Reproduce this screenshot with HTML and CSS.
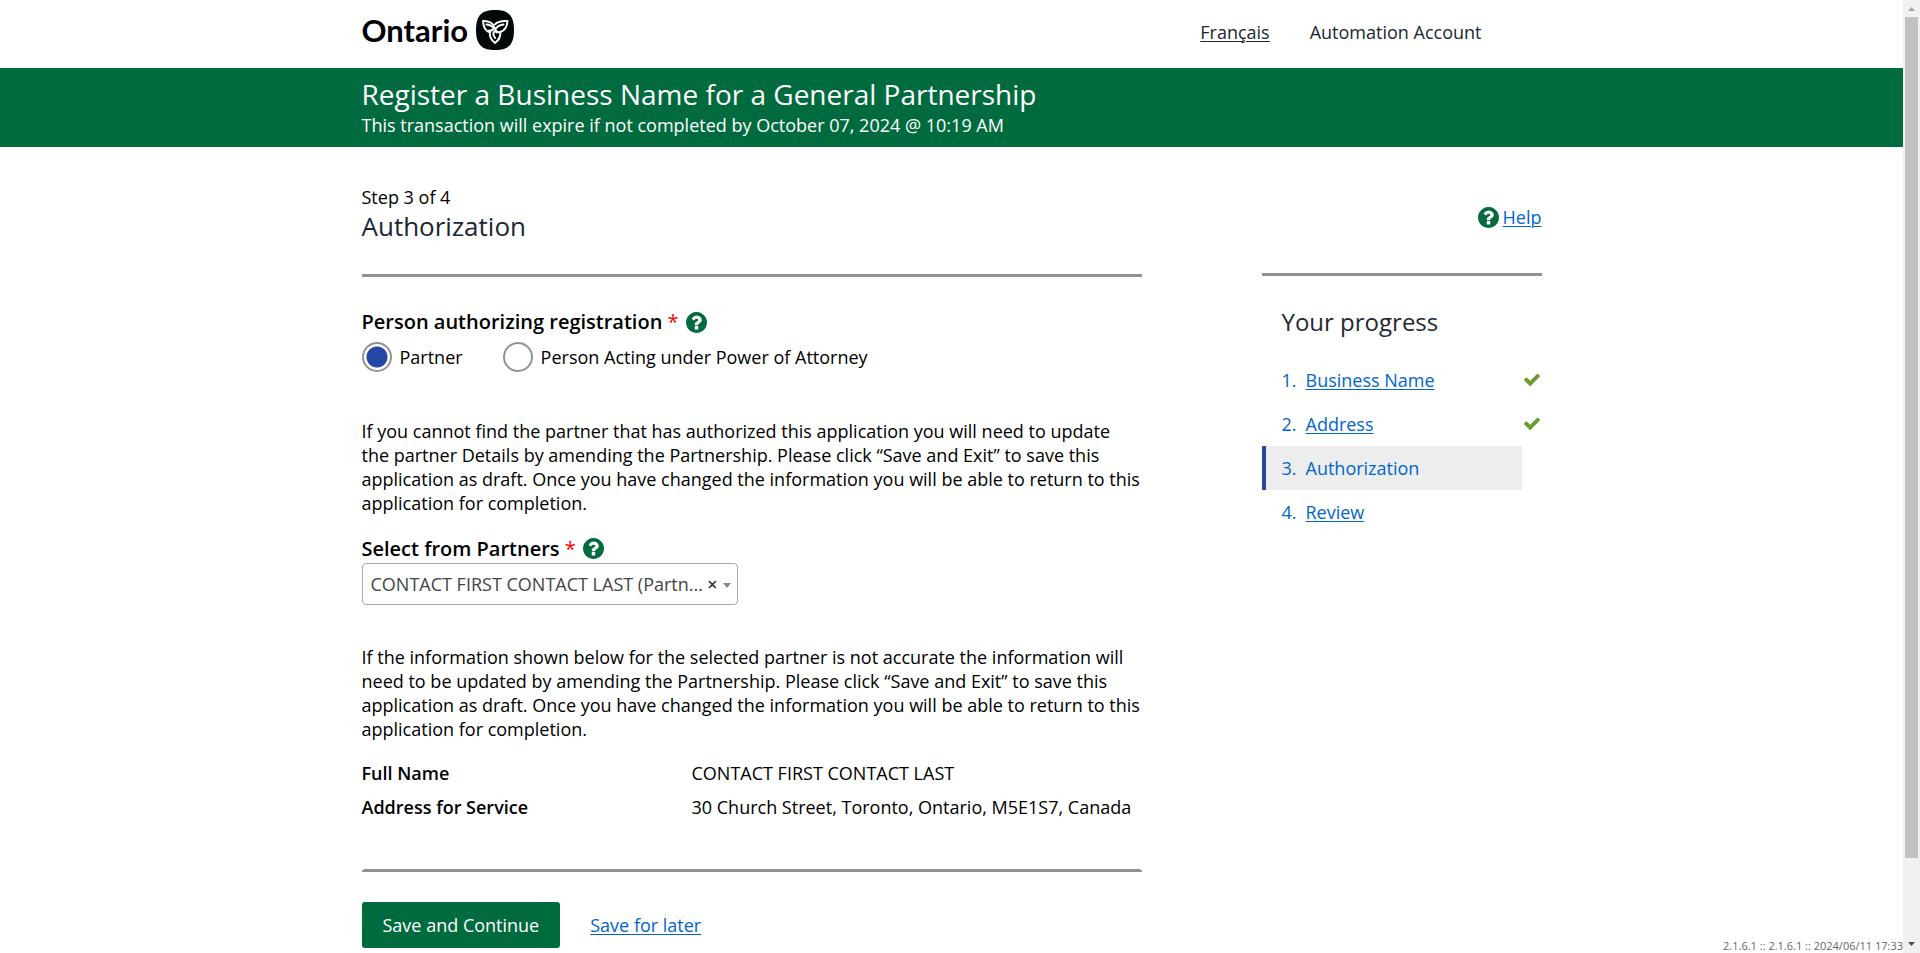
FILE: index.html
```html
<!DOCTYPE html>
<html lang="en">
<head>
<meta charset="utf-8">
<meta name="viewport" content="width=device-width, initial-scale=1">
<title>Register a Business Name for a General Partnership</title>
<link rel="stylesheet" href="styles.css">
</head>
<body>
<svg class="sprite" aria-hidden="true">
  <symbol id="question" viewBox="128 128 1536 1536"><path d="M1024 1376v-192q0-14-9-23t-23-9h-192q-14 0-23 9t-9 23v192q0 14 9 23t23 9h192q14 0 23-9t9-23zm256-672q0-88-55.5-163t-138.500-116-170-41q-243 0-371 213-15 24 8 42l132 100q7 6 19 6 16 0 25-12 53-68 86-92 34-24 86-24 48 0 85.500 26t37.500 59q0 38-20 61t-68 45q-63 28-115.500 86.500t-52.500 125.500v36q0 14 9 23t23 9h192q14 0 23-9t9-23q0-19 21.500-49.500t54.500-49.500q32-18 49-28.500t46-35 44.500-48 28-60.500 12.500-81zm384 192q0 209-103 385.500t-279.500 279.500-385.500 103-385.500-103-279.500-279.500-103-385.500 103-385.500 279.500-279.500 385.500-103 385.500 103 279.500 279.500 103 385.500z"/></symbol>
  <symbol id="check" viewBox="121 270 1550 1252"><path d="M1671 566q0 40-28 68l-724 724-136 136q-28 28-68 28t-68-28l-136-136-362-362q-28-28-28-68t28-68l136-136q28-28 68-28t68 28l294 295 656-657q28-28 68-28t68 28l136 136q28 28 28 68z"/></symbol>
</svg>
<div class="page">
  <header class="header">
    <div class="wrap header-row">
      <a class="logo" href="#" aria-label="Ontario">
        <span class="logo-text">Ontario</span>
        <svg class="logo-mark" viewBox="0 0 38 40" aria-hidden="true">
          <path d="M19 0C31 0 38 4 38 20S31 40 19 40 0 36 0 20 7 0 19 0z"/>
          <g class="logo-knot">
            <path d="M18.500 17.800C17.500 13.500 13 10.700 7 11c.4 6 3 10.300 6.700 11.200"/>
            <path d="M10.500 14.500c3 .2 5.500 1.200 7.300 3.500-1 2.200-3 3-4.800 2.600"/>
            <path d="M19 14.300C21.500 11.500 26 10.700 31.500 11c-.4 5.500-3 9.500-6.700 10.800-2 .7-3.800.2-4.800-1.300"/>
            <path d="M20 18.500c1.500-2.200 4-3.500 7.500-4"/>
            <path d="M19.700 18.300c-1 2.200-.4 3.700 1.300 4.200M14 21.500c-.8 4.500 1 8.500 5 11.500 4-3 5.800-6.500 5.300-11M18.500 21.300c-1.500 1.500-1.300 4.200.7 6.700"/>
          </g>
        </svg>
      </a>
      <nav class="account">
        <a class="lang" href="#" lang="fr">Français</a>
        <span>Automation Account</span>
      </nav>
    </div>
  </header>
  <div class="banner">
    <div class="wrap">
      <h1 class="banner-title">Register a Business Name for a General Partnership</h1>
      <p class="banner-note">This transaction will expire if not completed by October 07, 2024 @ 10:19 AM</p>
    </div>
  </div>
  <div class="wrap columns">
    <main>
      <form>
        <p class="text">Step 3 of 4</p>
        <h2 class="step-title">Authorization</h2>
        <hr class="rule">
        <fieldset class="choice">
          <legend class="label">Person authorizing registration <span class="required">*</span> <svg class="help-icon"><use href="#question"/></svg></legend>
          <div class="radios">
            <label class="radio"><input type="radio" name="authorizer" checked>Partner</label>
            <label class="radio"><input type="radio" name="authorizer">Person Acting under Power of Attorney</label>
          </div>
        </fieldset>
        <p class="text intro">If you cannot find the partner that has authorized this application you will need to update the partner Details by amending the Partnership. Please click “Save and Exit” to save this application as draft. Once you have changed the information you will be able to return to this application for completion.</p>
        <label class="label partner-label" for="partner">Select from Partners <span class="required">*</span> <svg class="help-icon"><use href="#question"/></svg></label>
        <div class="select-box">
          <select class="select" id="partner"><option>CONTACT FIRST CONTACT LAST (Partn...</option></select>
          <button class="clear" type="button" aria-label="Clear selection">×</button>
          <span class="arrow"></span>
        </div>
        <p class="text accuracy">If the information shown below for the selected partner is not accurate the information will need to be updated by amending the Partnership. Please click “Save and Exit” to save this application as draft. Once you have changed the information you will be able to return to this application for completion.</p>
        <dl class="details">
          <dt>Full Name</dt><dd>CONTACT FIRST CONTACT LAST</dd>
          <dt>Address for Service</dt><dd>30 Church Street, Toronto, Ontario, M5E1S7, Canada</dd>
        </dl>
        <hr class="rule rule-end">
        <div class="actions">
          <button class="primary" type="submit">Save and Continue</button>
          <a href="#">Save for later</a>
        </div>
      </form>
    </main>
    <aside>
      <div class="help"><svg class="help-icon"><use href="#question"/></svg><a href="#">Help</a></div>
      <hr class="rule">
      <h2 class="progress-title">Your progress</h2>
      <ol class="steps">
        <li class="step"><div class="step-box"><span class="number">1.</span><a href="#">Business Name</a></div><svg class="tick"><use href="#check"/></svg></li>
        <li class="step"><div class="step-box"><span class="number">2.</span><a href="#">Address</a></div><svg class="tick"><use href="#check"/></svg></li>
        <li class="step"><div class="step-box current" aria-current="step"><span class="number">3.</span><span>Authorization</span></div></li>
        <li class="step"><div class="step-box"><span class="number">4.</span><a href="#">Review</a></div></li>
      </ol>
    </aside>
  </div>
  <div class="version">2.1.6.1 :: 2.1.6.1 :: 2024/06/11 17:33</div>
</div>
<div class="scrollbar" aria-hidden="true">
  <svg class="scroll-arrow" viewBox="0 0 17 17"><path fill="#a3a3a3" d="M5 11h7L8.500 7z"/></svg>
  <div class="track"><div class="thumb"></div></div>
  <svg class="scroll-arrow" viewBox="0 0 17 17"><path fill="#505050" d="M5 6h7l-3.500 4z"/></svg>
</div>
</body>
</html>
```
FILE: styles.css
```css
*, *::before, *::after { box-sizing: border-box; }
body {
  margin: 0;
  background: #fff;
  color: #000;
  font: 18px/24px "Open Sans", "Noto Sans", sans-serif;
}
h1, h2, p, dl, dd, ol { margin: 0; padding: 0; font-weight: 400; }
a { color: #0066cc; text-underline-offset: 2px; text-decoration-thickness: 1px; }
button, input, select { font: inherit; margin: 0; }
.sprite { display: none; }
.page { position: relative; min-height: 100vh; margin-right: 17px; }
.wrap { max-width: 1220px; margin: 0 auto; padding: 0 20px; }

.header-row { display: flex; justify-content: space-between; align-items: flex-start; height: 68px; padding-top: 10px; }
.logo { display: flex; align-items: center; gap: 8px; color: #000; text-decoration: none; }
.logo-text { font: 700 31px/40px Lato, sans-serif; }
.logo-mark { width: 38px; height: 40px; fill: #030808; }
.logo-knot { fill: none; stroke: #fff; stroke-width: 2; stroke-linejoin: round; stroke-linecap: round; }
.account { display: flex; gap: 40px; padding: 10px 60px 0 0; color: #1a2732; }
.lang { color: inherit; }

.banner { background: #006b3f; color: #fff; padding: 7px 0 10px; }
.banner-title { font-size: 28px; line-height: 38px; }
.banner-note { font-weight: 500; }

.columns { display: grid; grid-template-columns: minmax(0, 780px) 280px; justify-content: space-between; padding-top: 38px; padding-bottom: 5px; }
.step-title { font-size: 26px; line-height: 34px; color: #1a2732; }
.rule { height: 3px; margin: 31px 0; border: 0; background: #929292; }
.label { font-size: 20px; line-height: 28px; font-weight: 600; }
.required { color: #ff0000; font-weight: 400; }
.help-icon { width: 21px; height: 21px; margin-left: 2px; vertical-align: -4px; fill: #006b3f; }
.choice { border: 0; margin: 0; padding: 0; }
.choice legend { padding: 0; }
.radios { display: flex; gap: 40px; margin-top: 6px; }
.radio { display: flex; align-items: center; gap: 8px; }
.radio input {
  appearance: none;
  width: 30px;
  height: 30px;
  border: 2px solid #929292;
  border-radius: 50%;
  background: #fff;
}
.radio input:checked { background: radial-gradient(circle, #2646a8 10px, #fff 11px); }
.intro { margin-top: 47px; }
.partner-label { display: block; margin-top: 20px; }
.partner-label .help-icon { vertical-align: -3px; }
.select-box { position: relative; max-width: 376px; }
.select {
  display: block;
  appearance: none;
  width: 100%;
  height: 42px;
  padding: 0 0 0 8px;
  border: 1px solid #aaa;
  border-radius: 4px;
  background: #fff;
  color: #444;
}
.clear { position: absolute; right: 20px; top: 9px; padding: 0; border: 0; background: none; color: #333; font-weight: 600; }
.arrow { position: absolute; right: 7px; top: 20px; border: 4px solid transparent; border-top: 5px solid #888; border-bottom: 0; }
.accuracy { margin-top: 40px; }
.details { display: grid; grid-template-columns: 330px 1fr; row-gap: 10px; margin-top: 20px; }
.details dt { font-weight: 600; }
.rule-end { margin: 50px 0 30px; border-radius: 3px 3px 0 0; }
.actions { display: flex; align-items: center; gap: 30px; }
.primary { padding: 11px 21px; border: 0; border-radius: 3px; background: #006b3f; color: #fff; font-weight: 500; }

.help { display: flex; justify-content: flex-end; align-items: center; gap: 4px; padding-top: 20px; }
aside .rule { margin: 44px 0 30px; }
.progress-title { padding-left: 20px; font-size: 24px; line-height: 32px; color: #222a33; }
.steps { margin-top: 20px; list-style: none; color: #0066cc; }
.step { display: grid; grid-template-columns: 1fr 20px; align-items: center; }
.step-box { display: flex; padding: 10px 16px; border-left: 4px solid transparent; }
.number { width: 24px; }
.current { border-color: #2646a8; background: #ededed; }
.tick { width: 16px; height: 13px; margin: 0 2px 2px 0; justify-self: end; fill: #6f9c2f; }

.version { position: absolute; right: 0; bottom: 0; font-size: 11px; line-height: 14px; color: #666; }
.scrollbar { position: fixed; top: 0; right: 0; bottom: 0; display: flex; flex-direction: column; width: 17px; background: #f1f1f1; }
.scroll-arrow { width: 17px; height: 17px; }
.track { flex: 1; padding: 0 2px; }
.thumb { height: 91.5%; background: #c1c1c1; }
```
